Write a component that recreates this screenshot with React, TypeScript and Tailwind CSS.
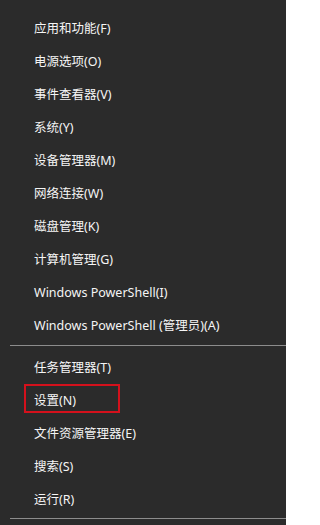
import React from 'react';

const groupOne = [
  '应用和功能(F)',
  '电源选项(O)',
  '事件查看器(V)',
  '系统(Y)',
  '设备管理器(M)',
  '网络连接(W)',
  '磁盘管理(K)',
  '计算机管理(G)',
  'Windows PowerShell(I)',
  'Windows PowerShell (管理员)(A)',
];

const groupTwo = ['任务管理器(T)', '设置(N)', '文件资源管理器(E)', '搜索(S)', '运行(R)'];

function MenuItem({ label, marked }: { label: string; marked?: boolean }) {
  return (
    <div className="relative flex h-[33px] items-center pl-[34px] pt-[4px] text-[12.5px] leading-none text-[#f5f5f5]">
      <span>{label}</span>
      {marked && (
        <div className="absolute left-[24px] top-[1px] h-[29px] w-[96px] border-2 border-[#d4111c]" />
      )}
    </div>
  );
}

export default function App() {
  return (
    <div
      className="h-[525px] w-[286px] overflow-hidden bg-[#2b2b2b] pt-[11px]"
      style={{ fontFamily: '"Noto Sans", "Noto Sans CJK SC", sans-serif' }}
    >
      {groupOne.map((label) => (
        <MenuItem key={label} label={label} />
      ))}
      <div className="my-[4px] ml-[10px] h-px bg-[#8c8c8c]" />
      {groupTwo.map((label) => (
        <MenuItem key={label} label={label} marked={label === '设置(N)'} />
      ))}
      <div className="mt-[3px] ml-[10px] h-px bg-[#8c8c8c]" />
    </div>
  );
}
